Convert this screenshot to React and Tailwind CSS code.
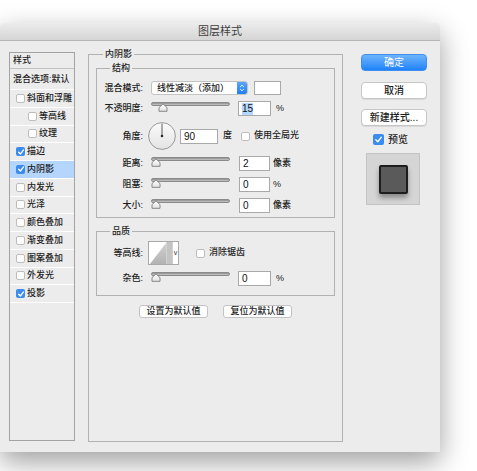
import React from "react";

const Cb = ({ checked }) =>
  checked ? (
    <span className="flex w-[9px] h-[9px] shrink-0 rounded-[2px] bg-[#3a8cf0] items-center justify-center">
      <svg viewBox="0 0 10 10" className="w-[8px] h-[8px]">
        <path d="M2 5.3 L4.2 7.5 L8.2 2.4" stroke="white" strokeWidth="1.6" fill="none" strokeLinecap="round" strokeLinejoin="round" />
      </svg>
    </span>
  ) : (
    <span className="block w-[9px] h-[9px] shrink-0 rounded-[2px] bg-white border border-[#bdbdbd]" />
  );

const Slider = ({ pos = 0 }) => (
  <div className="relative w-[79px] h-[15px] shrink-0">
    <div className="absolute left-0 right-0 top-[1px] h-[4px] rounded-full bg-gradient-to-b from-[#8e8e8e] to-[#c9c9c9] border border-[#8a8a8a]" />
    <svg
      viewBox="0 0 10 9"
      className="absolute top-[2px] w-[10px] h-[9px]"
      style={{ left: pos }}
    >
      <defs>
        <linearGradient id="thg" x1="0" y1="0" x2="0" y2="1">
          <stop offset="0" stopColor="#ffffff" />
          <stop offset="1" stopColor="#e2e2e2" />
        </linearGradient>
      </defs>
      <path d="M1 8.3 V4.6 L5 0.9 L9 4.6 V8.3 Z" fill="url(#thg)" stroke="#7d7d7d" strokeWidth="0.9" strokeLinejoin="round" />
    </svg>
  </div>
);

const Input = ({ children, w = "w-[31px]", sel }) => (
  <div className={`${w} h-[15px] shrink-0 bg-white border border-[#a9a9a9] flex items-center pl-[3px] text-[10px] text-[#111]`}>
    {sel ? <span className="bg-[#b3d7ff] leading-[12px]">{children}</span> : children}
  </div>
);

const Label = ({ children }) => (
  <div className="w-[46px] shrink-0 text-right text-[9px] text-[#1c1c1c] leading-none">{children}</div>
);

const ListRow = ({ label, checked, nested, selected }) => (
  <div
    className={`h-[17.75px] flex items-center border-b border-white ${nested ? "pl-[18px]" : "pl-[6px]"} ${selected ? "bg-[#b4d5fc]" : ""}`}
  >
    <Cb checked={checked} />
    <span className="ml-[2px] text-[9px] leading-none text-[#1c1c1c]">{label}</span>
  </div>
);

const Btn = ({ children }) => (
  <div className="w-[66px] h-[17px] rounded-[4px] bg-white border border-[#c6c6c6] shadow-[0_1px_0_rgba(0,0,0,0.08)] flex items-center justify-center text-[10px] text-[#1c1c1c]">
    {children}
  </div>
);

export default function App() {
  return (
    <div className="w-[477px] h-[471px] bg-white overflow-hidden pt-[23px] font-medium font-['Liberation_Sans','Noto_Sans_CJK_SC',sans-serif]">
      <div className="w-[440px] h-[429px] rounded-t-[5px] bg-[#ececec] shadow-[0_10px_28px_rgba(0,0,0,0.38)] flex flex-col">
        {/* title bar */}
        <div className="h-[18px] shrink-0 rounded-t-[5px] bg-gradient-to-b from-[#ececec] to-[#d5d5d5] border-b border-[#b6b6b6] flex items-center justify-center text-[11px] font-normal text-[#3e3e3e]">
          图层样式
        </div>

        {/* body */}
        <div className="flex pl-[9px] pt-[11px]">
          {/* left list */}
          <div className="w-[66px] h-[389px] shrink-0 border border-[#a3a3a3] flex flex-col bg-[#ececec]">
            <div className="h-[16px] border-b border-[#c2c2c2] flex items-center pl-[3px] text-[9px] leading-none text-[#1c1c1c]">样式</div>
            <div className="h-[21px] border-b border-white flex items-center pl-[3px] text-[9px] leading-none text-[#1c1c1c]">混合选项:默认</div>
            <ListRow label="斜面和浮雕" />
            <ListRow label="等高线" nested />
            <ListRow label="纹理" nested />
            <ListRow label="描边" checked />
            <ListRow label="内阴影" checked selected />
            <ListRow label="内发光" />
            <ListRow label="光泽" />
            <ListRow label="颜色叠加" />
            <ListRow label="渐变叠加" />
            <ListRow label="图案叠加" />
            <ListRow label="外发光" />
            <ListRow label="投影" checked />
          </div>

          {/* middle group */}
          <div className="relative ml-[13px] mt-[2px] w-[255px] h-[388px] shrink-0 border border-[#b1b1b1] pt-[13px] px-[7px]">
            <div className="absolute -top-[7px] left-[14px] px-[2px] bg-[#ececec] text-[9px] leading-[12px] text-[#1c1c1c]">内阴影</div>

            {/* 结构 */}
            <div className="relative h-[150px] border border-[#b1b1b1] pt-[12px]">
              <div className="absolute -top-[7px] left-[13px] px-[2px] bg-[#ececec] text-[9px] leading-[12px] text-[#1c1c1c]">结构</div>

              <div className="flex items-center h-[14px]">
                <Label>混合模式:</Label>
                <div className="ml-[8px] w-[97px] h-[14px] shrink-0 rounded-[3px] bg-white border border-[#c3c3c3] flex items-center overflow-hidden">
                  <span className="flex-1 pl-[5px] text-[9px] leading-none text-[#1c1c1c]">线性减淡（添加）</span>
                  <div className="w-[10px] h-full bg-gradient-to-b from-[#5aa6fb] to-[#1c7ff4] flex items-center justify-center">
                    <svg viewBox="0 0 8 12" className="w-[6px] h-[10px]">
                      <path d="M1.6 4.6 L4 2.2 L6.4 4.6 M1.6 7.4 L4 9.8 L6.4 7.4" stroke="white" strokeWidth="1.2" fill="none" />
                    </svg>
                  </div>
                </div>
                <div className="ml-[6px] w-[27px] h-[14px] shrink-0 bg-white border border-[#a9a9a9]" />
              </div>

              <div className="flex items-center h-[15px] mt-[6px]">
                <Label>不透明度:</Label>
                <div className="ml-[8px]"><Slider pos={7} /></div>
                <div className="ml-[8px]"><Input w="w-[33px]" sel>15</Input></div>
                <span className="ml-[5px] text-[9px] text-[#1c1c1c]">%</span>
              </div>

              <div className="flex items-center h-[28px] mt-[6px]">
                <Label>角度:</Label>
                <svg viewBox="0 0 28 28" className="ml-[5px] w-[28px] h-[28px] shrink-0">
                  <defs>
                    <linearGradient id="cg" x1="0" y1="0" x2="0" y2="1">
                      <stop offset="0" stopColor="#fbfbfb" />
                      <stop offset="1" stopColor="#e3e3e3" />
                    </linearGradient>
                  </defs>
                  <circle cx="14" cy="14" r="13.4" fill="url(#cg)" stroke="#8e8e8e" strokeWidth="0.9" />
                  <line x1="14" y1="14" x2="14" y2="1.5" stroke="#4a4a4a" strokeWidth="0.9" />
                  <circle cx="14" cy="14" r="1.3" fill="#2a2a2a" />
                </svg>
                <div className="ml-[4px]"><Input w="w-[38px]">90</Input></div>
                <span className="ml-[5px] text-[9px] text-[#1c1c1c]">度</span>
                <div className="ml-[9px]"><Cb /></div>
                <span className="ml-[4px] text-[9px] text-[#1c1c1c]">使用全局光</span>
              </div>

              {[
                ["距离:", "2", "像素"],
                ["阻塞:", "0", "%"],
                ["大小:", "0", "像素"],
              ].map(([l, v, u]) => (
                <div key={l} className="flex items-center h-[15px] mt-[6px]">
                  <Label>{l}</Label>
                  <div className="ml-[8px]"><Slider /></div>
                  <div className="ml-[9px]"><Input>{v}</Input></div>
                  <span className="ml-[3px] text-[9px] text-[#1c1c1c]">{u}</span>
                </div>
              ))}
            </div>

            {/* 品质 */}
            <div className="relative mt-[13px] h-[65px] border border-[#b1b1b1] pt-[9px]">
              <div className="absolute -top-[7px] left-[13px] px-[2px] bg-[#ececec] text-[9px] leading-[12px] text-[#1c1c1c]">品质</div>
              <div className="flex items-center h-[24px]">
                <Label>等高线:</Label>
                <div className="ml-[5px] flex h-[24px] shrink-0 border border-[#a9a9a9] bg-white">
                  <svg viewBox="0 0 23 22" className="w-[23px] h-[22px]">
                    <defs>
                      <linearGradient id="tg" x1="0" y1="0" x2="0" y2="1">
                        <stop offset="0" stopColor="#d2d2d2" />
                        <stop offset="1" stopColor="#b2b2b2" />
                      </linearGradient>
                    </defs>
                    <rect x="0" y="0" width="23" height="22" fill="white" />
                    <polygon points="1,22 17.5,0.5 17.5,22" fill="url(#tg)" />
                    <rect x="17.5" y="0" width="5.5" height="22" fill="#c4c4c4" />
                  </svg>
                  <div className="w-[6px] h-full bg-white border-l border-[#cfcfcf] flex items-center justify-center text-[7px] text-[#333]">v</div>
                </div>
                <div className="ml-[17px]"><Cb /></div>
                <span className="ml-[4px] text-[9px] text-[#1c1c1c]">消除锯齿</span>
              </div>
              <div className="flex items-center h-[15px] mt-[6px]">
                <Label>杂色:</Label>
                <div className="ml-[8px]"><Slider /></div>
                <div className="ml-[8px]"><Input w="w-[33px]">0</Input></div>
                <span className="ml-[5px] text-[9px] text-[#1c1c1c]">%</span>
              </div>
            </div>

            <div className="mt-[9px] flex justify-center gap-[15px]">
              <div className="w-[69px] h-[13px] rounded-[3px] bg-white border border-[#c3c3c3] flex items-center justify-center text-[9px] text-[#1c1c1c]">设置为默认值</div>
              <div className="w-[69px] h-[13px] rounded-[3px] bg-white border border-[#c3c3c3] flex items-center justify-center text-[9px] text-[#1c1c1c]">复位为默认值</div>
            </div>
          </div>

          {/* right column */}
          <div className="ml-[18px] w-[66px] shrink-0 pt-[2px] flex flex-col">
            <div className="h-[17px] rounded-[4px] bg-gradient-to-b from-[#6db4fb] to-[#1b82fb] border border-[#3e8ff0] flex items-center justify-center text-[10px] font-normal text-white">确定</div>
            <div className="mt-[11px]"><Btn>取消</Btn></div>
            <div className="mt-[10px]"><Btn>新建样式...</Btn></div>
            <div className="mt-[7px] h-[12px] flex items-center pl-[12px]">
              <span className="flex w-[11px] h-[11px] rounded-[2px] bg-[#3a8cf0] items-center justify-center">
                <svg viewBox="0 0 10 10" className="w-[9px] h-[9px]">
                  <path d="M2 5.3 L4.2 7.5 L8.2 2.4" stroke="white" strokeWidth="1.5" fill="none" strokeLinecap="round" strokeLinejoin="round" />
                </svg>
              </span>
              <span className="ml-[4px] text-[10px] text-[#1c1c1c]">预览</span>
            </div>
            <div className="mt-[8px] ml-[5px] w-[54px] h-[52px] bg-[#d5d5d5] border border-[#c4c4c4] flex items-center justify-center">
              <div className="w-[29px] h-[29px] rounded-[2px] bg-[#5a5a5a] border-2 border-[#1d1d1d] shadow-[0_4px_5px_rgba(0,0,0,0.35)]" />
            </div>
          </div>
        </div>
      </div>
    </div>
  );
}
